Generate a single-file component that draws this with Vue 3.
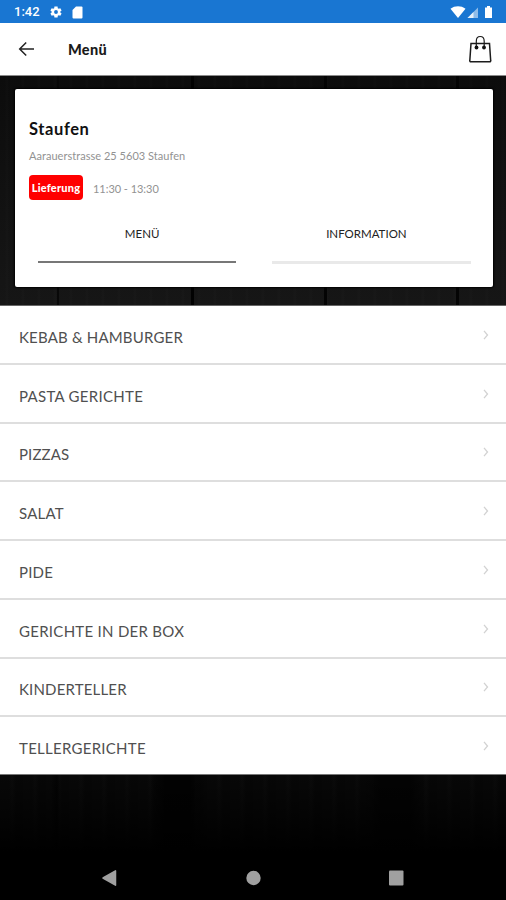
<script setup>
const categories = [
  { name: 'KEBAB & HAMBURGER', spacing: 0.18 },
  { name: 'PASTA GERICHTE', spacing: 0.29 },
  { name: 'PIZZAS', spacing: 0.1 },
  { name: 'SALAT', spacing: 0.2 },
  { name: 'PIDE', spacing: 0.2 },
  { name: 'GERICHTE IN DER BOX', spacing: 0.28 },
  { name: 'KINDERTELLER', spacing: 0.17 },
  { name: 'TELLERGERICHTE', spacing: 0.27 },
]
</script>

<template>
  <div class="screen">
    <div class="status">
      <span class="clock">1:42</span>
      <svg class="gear" width="14" height="14" viewBox="0 0 24 24">
        <path fill="#fff" fill-rule="evenodd" d="M19.4 13c.1-.7.1-1.300 0-2l2.200-1.700-2.200-3.800-2.600 1c-.5-.4-1.100-.7-1.700-1L14.700 2.500H9.300L8.900 5.500c-.6.300-1.200.6-1.700 1l-2.600-1-2.200 3.800L4.600 11c-.1.700-.1 1.300 0 2l-2.200 1.700 2.200 3.800 2.600-1c.5.4 1.100.7 1.700 1l.4 3h5.400l.4-3c.6-.3 1.200-.6 1.700-1l2.600 1 2.200-3.800zM12 15.300a3.300 3.300 0 1 1 0-6.600 3.300 3.300 0 0 1 0 6.600z" />
      </svg>
      <svg class="sd" width="11" height="13" viewBox="0 0 11 13">
        <path fill="#fff" d="M4 .5h5.500a1 1 0 0 1 1 1v10a1 1 0 0 1-1 1h-8a1 1 0 0 1-1-1V4z" />
      </svg>
      <svg class="radio" width="44" height="14" viewBox="0 0 44 14">
        <path fill="#fff" d="M.5 3.700C4.800.4 11.200.4 15.500 3.700L8 13z" />
        <path fill="#8fbce9" d="M17.500 13 28 2.500V13z" />
        <path fill="#e4effa" d="M17.500 13 23.500 7v6z" />
        <path fill="#fff" d="M35 2.500h2V1h3v1.500h2V13h-7z" />
      </svg>
    </div>

    <header class="bar">
      <svg class="back" width="17" height="16" viewBox="0 0 17 16">
        <path d="M16 8H2M8.200 1.500 1.700 8l6.500 6.500" fill="none" stroke="#222" stroke-width="1.500" />
      </svg>
      <h1>Menü</h1>
      <svg class="bag" width="24" height="28" viewBox="0 0 24 28">
        <g fill="none" stroke="#1c1c1c">
          <path d="M3 8.500h18.500l1.200 17.200a.9.900 0 0 1-.9 1H2.700a.9.900 0 0 1-.9-1z" stroke-width="1.500" />
          <path d="M8.300 12V6.300C8.300 3 9.800 1.500 12.200 1.500s4 1.500 4 4.800V12" stroke-width="1.200" />
        </g>
        <circle cx="8.500" cy="12.500" r="1.900" fill="#111" />
        <circle cx="16" cy="12.500" r="1.900" fill="#111" />
      </svg>
    </header>

    <section class="hero">
      <div class="card">
        <h2>Staufen</h2>
        <p class="address">Aarauerstrasse 25 5603 Staufen</p>
        <div class="delivery">
          <span class="badge">Lieferung</span>
          <span class="hours">11:30 - 13:30</span>
        </div>
        <div class="tabs">
          <div class="tab active"><span>MENÜ</span></div>
          <div class="tab"><span>INFORMATION</span></div>
        </div>
      </div>
    </section>

    <ul class="list">
      <li v-for="c in categories" :key="c.name">
        <span :style="{ letterSpacing: c.spacing + 'px' }">{{ c.name }}</span>
        <svg width="6" height="10" viewBox="0 0 6 10">
          <path d="M1 .8 4.500 5 1 9.200" fill="none" stroke="#d2d2d2" stroke-width="1.300" />
        </svg>
      </li>
    </ul>

    <div class="wood"></div>

    <nav class="nav">
      <svg width="506" height="44" viewBox="0 0 506 44">
        <path d="M103 22 115.500 14.800v14.400z" fill="#a0a0a0" stroke="#a0a0a0" stroke-width="1.500" stroke-linejoin="round" />
        <circle cx="253.500" cy="22" r="7.200" fill="#a0a0a0" />
        <rect x="389" y="14.500" width="14.500" height="15" rx="1" fill="#a0a0a0" />
      </svg>
    </nav>
  </div>
</template>

<style>
body {
  margin: 0;
  background: #000;
}
</style>

<style scoped>
.screen {
  width: 506px;
  height: 900px;
  display: flex;
  flex-direction: column;
  overflow: hidden;
  background: #000;
  font-family: Lato, "Liberation Sans", sans-serif;
}
.status {
  box-sizing: border-box;
  height: 23px;
  flex: none;
  display: flex;
  align-items: center;
  padding: 1px 12px 0 14px;
  background: #1976d2;
  color: #fff;
}
.clock {
  width: 35px;
  font: 500 13px/22px Roboto, sans-serif;
}
.sd {
  margin-left: 9px;
}
.radio {
  margin-left: auto;
}
.bar {
  box-sizing: border-box;
  height: 53px;
  flex: none;
  display: flex;
  align-items: center;
  padding: 0 14px 0 18px;
  background: #fff;
  border-bottom: 1px solid #8a8a8a;
}
h1 {
  margin: 2px 0 0 33px;
  font-size: 14.500px;
  font-weight: 900;
  line-height: 20px;
  letter-spacing: 0.3px;
  color: #1a1a1a;
}
.bag {
  margin-left: auto;
}
.hero {
  box-sizing: border-box;
  height: 230px;
  flex: none;
  padding: 13px 13.500px 18px 14.500px;
  border-bottom: 1px solid #666;
  background:
    linear-gradient(90deg, transparent 57px, #080808 57px 59px, transparent 59px 191px, #020202 191px 194px, transparent 194px 324px, #040404 324px 327px, transparent 327px 456px, #040404 456px 459px, transparent 459px),
    repeating-linear-gradient(90deg, transparent 0 5px, rgba(255, 255, 255, 0.012) 7px, transparent 9px 16px),
    linear-gradient(#0c0c0c, #161616);
}
.card {
  box-sizing: border-box;
  height: 198px;
  padding: 30px 22px 0 14.500px;
  border-radius: 2px;
  background: #fff;
  box-shadow: 0 0 2px 1px #000;
}
h2 {
  margin: 0;
  font-size: 16.500px;
  font-weight: 700;
  line-height: 20px;
  letter-spacing: 0.6px;
  color: #111;
}
.address {
  margin: 9px 0 0;
  font-size: 11px;
  line-height: 16px;
  letter-spacing: 0.03px;
  color: #929292;
}
.delivery {
  display: flex;
  align-items: center;
  margin-top: 11px;
}
.badge {
  width: 54px;
  height: 25px;
  border-radius: 4px;
  background: #f00;
  color: #fff;
  font-size: 11px;
  font-weight: 900;
  letter-spacing: 0.2px;
  line-height: 25px;
  text-align: center;
}
.hours {
  margin: 1px 0 0 10px;
  font-size: 11px;
  letter-spacing: -0.04px;
  color: #929292;
}
.tabs {
  display: flex;
  gap: 36px;
  margin: 23px 0 0 9px;
}
.tab {
  box-sizing: border-box;
  flex: 1 1 0;
  min-width: 0;
  height: 41px;
  border-bottom: 3px solid #e9e9e9;
  text-align: center;
  font-size: 11.500px;
  line-height: 16px;
  color: #222;
}
.tab span {
  display: block;
  padding: 3px 10px 0 0;
}
.tab.active {
  height: 40px;
  border-bottom: 2px solid #777;
}
.tab.active span {
  padding: 3px 0 0 10px;
}
.list {
  height: 469px;
  flex: none;
  display: flex;
  flex-direction: column;
  margin: 0;
  padding: 0;
  list-style: none;
  background: #fff;
}
.list li {
  box-sizing: border-box;
  flex: 1;
  display: flex;
  align-items: center;
  justify-content: space-between;
  padding: 5px 17px 0 19px;
  border-bottom: 2px solid #dedede;
  font-size: 15px;
  line-height: 20px;
  color: #505050;
}
.list li:last-child {
  border-bottom: 1px solid #777;
}
.list svg {
  margin-bottom: 4px;
}
.wood {
  flex: 1;
  background:
    linear-gradient(transparent, #000 95%),
    linear-gradient(90deg, transparent 51px, #030303 57px, transparent 60px 150px, #020202 165px 190px, transparent 205px 365px, #030303 380px 410px, transparent 425px),
    repeating-linear-gradient(90deg, #080808 0 9px, #0b0b0b 12px, #070707 16px 23px);
}
.nav {
  height: 44px;
  flex: none;
  background: #000;
}
.nav svg {
  display: block;
}
</style>
